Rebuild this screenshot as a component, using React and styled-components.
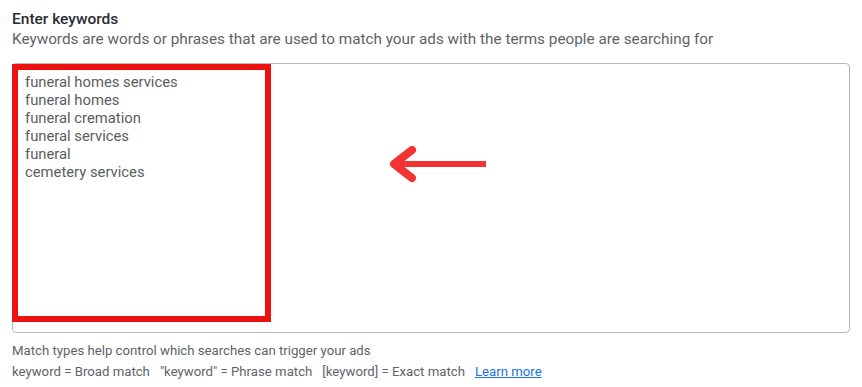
import React from 'react';
import styled, { createGlobalStyle } from 'styled-components';

const Global = createGlobalStyle`
  html, body { margin: 0; background: #fff; }
  body { font-family: Roboto, "Noto Sans", Arial, sans-serif; }
`;

const keywords = [
  'funeral homes services',
  'funeral homes',
  'funeral cremation',
  'funeral services',
  'funeral',
  'cemetery services',
];

const Page = styled.div`
  width: 862px;
  height: 387px;
  box-sizing: border-box;
  padding: 9px 12px 0 12px;
`;

const Title = styled.div`
  font-size: 15.5px;
  font-weight: 500;
  color: #2b2c2f;
  line-height: 20px;
`;

const Subtitle = styled.div`
  font-size: 15.3px;
  color: #5f6368;
  line-height: 20px;
  margin-bottom: 14px;
`;

const Field = styled.div`
  position: relative;
  width: 838px;
  height: 270px;
  box-sizing: border-box;
  border: 1px solid #b5b8bb;
  border-radius: 4px;
  padding: 9px 12px;
`;

const List = styled.div`
  font-size: 14.8px;
  line-height: 18px;
  color: #5a5d61;
`;

const Highlight = styled.div`
  position: absolute;
  left: -1px;
  top: 0px;
  width: 259px;
  height: 258px;
  box-sizing: border-box;
  border: 6px solid #ee1111;
`;

const Arrow = styled.svg`
  position: absolute;
  left: 372px;
  top: 82px;
`;

const Help = styled.div`
  font-size: 13.2px;
  color: #5f6368;
  line-height: 21px;
  margin-top: 7px;
`;

const Gap = styled.span`
  display: inline-block;
  width: ${p => p.w}px;
`;

const LearnMore = styled.a`
  color: #1a73e8;
  text-decoration: underline;
  cursor: pointer;
`;

export default function App() {
  return (
    <Page>
      <Global />
      <Title>Enter keywords</Title>
      <Subtitle>Keywords are words or phrases that are used to match your ads with the terms people are searching for</Subtitle>
      <Field>
        <List>
          {keywords.map(k => <div key={k}>{k}</div>)}
        </List>
        <Highlight />
        <Arrow width="110" height="40" viewBox="0 0 110 40">
          <g stroke="#f23333" strokeLinecap="round" strokeLinejoin="round" fill="none">
            <line x1="10" y1="18" x2="101" y2="18" strokeWidth="6" strokeLinecap="butt" />
            <polyline points="27,4 9,18 27,32" strokeWidth="8" />
          </g>
        </Arrow>
      </Field>
      <Help>
        <div>Match types help control which searches can trigger your ads</div>
        <div>
          keyword = Broad match<Gap w={10} />"keyword" = Phrase match<Gap w={10} />[keyword] = Exact match<Gap w={10} />
          <LearnMore>Learn more</LearnMore>
        </div>
      </Help>
    </Page>
  );
}
